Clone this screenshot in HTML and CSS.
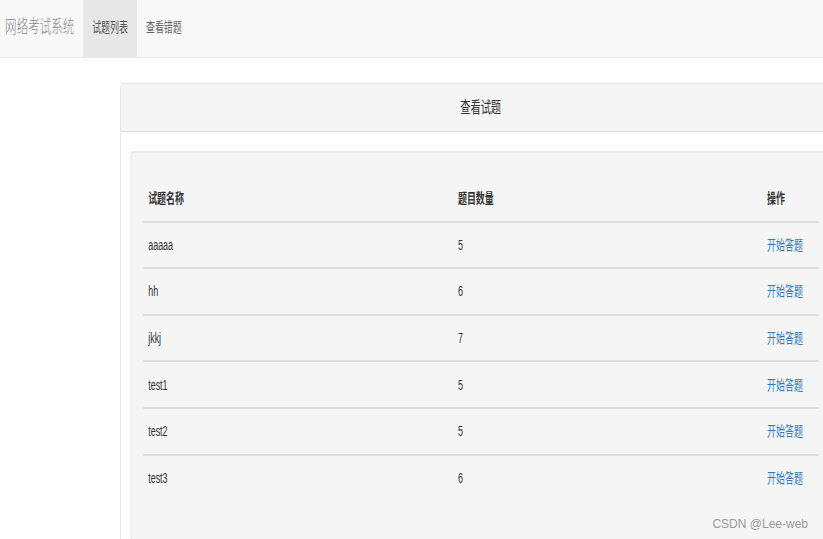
FILE: index.html
```html
<!DOCTYPE html>
<html lang="zh-CN">
<head>
<meta charset="utf-8">
<title>网络考试系统</title>
<link rel="stylesheet" href="styles.css">
</head>
<body>
<div class="page">
  <nav class="navbar">
    <span class="brand">网络考试系统</span>
    <ul class="nav">
      <li class="nav-item active"><a href="#">试题列表</a></li>
      <li class="nav-item"><a href="#">查看错题</a></li>
    </ul>
  </nav>
  <div class="panel">
    <div class="panel-heading">查看试题</div>
    <div class="panel-body">
      <div class="well">
        <table class="table">
          <thead>
            <tr><th class="c1">试题名称</th><th class="c2">题目数量</th><th>操作</th></tr>
          </thead>
          <tbody>
            <tr><td>aaaaa</td><td>5</td><td><a href="#">开始答题</a></td></tr>
            <tr><td>hh</td><td>6</td><td><a href="#">开始答题</a></td></tr>
            <tr><td>jkkj</td><td>7</td><td><a href="#">开始答题</a></td></tr>
            <tr><td>test1</td><td>5</td><td><a href="#">开始答题</a></td></tr>
            <tr><td>test2</td><td>5</td><td><a href="#">开始答题</a></td></tr>
            <tr><td>test3</td><td>6</td><td><a href="#">开始答题</a></td></tr>
          </tbody>
        </table>
      </div>
    </div>
  </div>
</div>
<div class="watermark">CSDN @Lee-web</div>
</body>
</html>
```
FILE: styles.css
```css
html, body {
  margin: 0;
  padding: 0;
  overflow: hidden;
  background: #fff;
}
body {
  font-family: "Liberation Sans", "Noto Sans CJK SC", sans-serif;
  font-size: 14px;
  color: #333;
  height: 539px;
}
.page {
  width: 1286px;
  transform: scaleX(0.64);
  transform-origin: 0 0;
}
.navbar {
  display: flex;
  background: #f8f8f8;
  border-bottom: 1px solid #e7e7e7;
  height: 57px;
}
.brand {
  font-size: 18px;
  line-height: 20px;
  padding: 17px 14px 20px 8px;
  color: #888;
  font-weight: 300;
}
.nav {
  display: flex;
  list-style: none;
  margin: 0;
  padding: 0;
}
.nav-item a {
  display: block;
  padding: 17px 14px 20px;
  line-height: 20px;
  color: #666;
  text-decoration: none;
}
.nav-item.active a {
  background: #e7e7e7;
  color: #555;
}
.panel {
  margin: 25px 0 0 187.5px;
  width: 1125px;
  border: 1px solid #ddd;
  border-radius: 4px;
  background: #fff;
}
.panel-heading {
  background: #f5f5f5;
  border-bottom: 1px solid #ddd;
  padding: 12px 15px;
  font-size: 16px;
  line-height: 23px;
  text-align: center;
  border-radius: 3px 3px 0 0;
}
.panel-body {
  padding: 19px 15px;
}
.well {
  background: #f5f5f5;
  border: 1px solid #e3e3e3;
  border-radius: 4px;
  box-shadow: inset 0 1px 1px rgba(0, 0, 0, 0.05);
  padding: 24px 19px 19px;
}
.table {
  width: 100%;
  border-collapse: collapse;
  margin-bottom: 20px;
}
.table th,
.table td {
  text-align: left;
  padding: 12.3px 8px;
  line-height: 20px;
  vertical-align: middle;
}
.table th {
  font-weight: bold;
  border-bottom: 2px solid #ddd;
}
.table td {
  border-top: 2px solid #ddd;
}
.table .c1 { width: 468px; }
.table .c2 { width: 467px; }
.table a {
  color: #337ab7;
  text-decoration: none;
}
.watermark {
  position: absolute;
  right: 15px;
  bottom: 8px;
  font-family: "Liberation Sans", sans-serif;
  font-size: 12px;
  line-height: 14px;
  color: #999;
}
```
